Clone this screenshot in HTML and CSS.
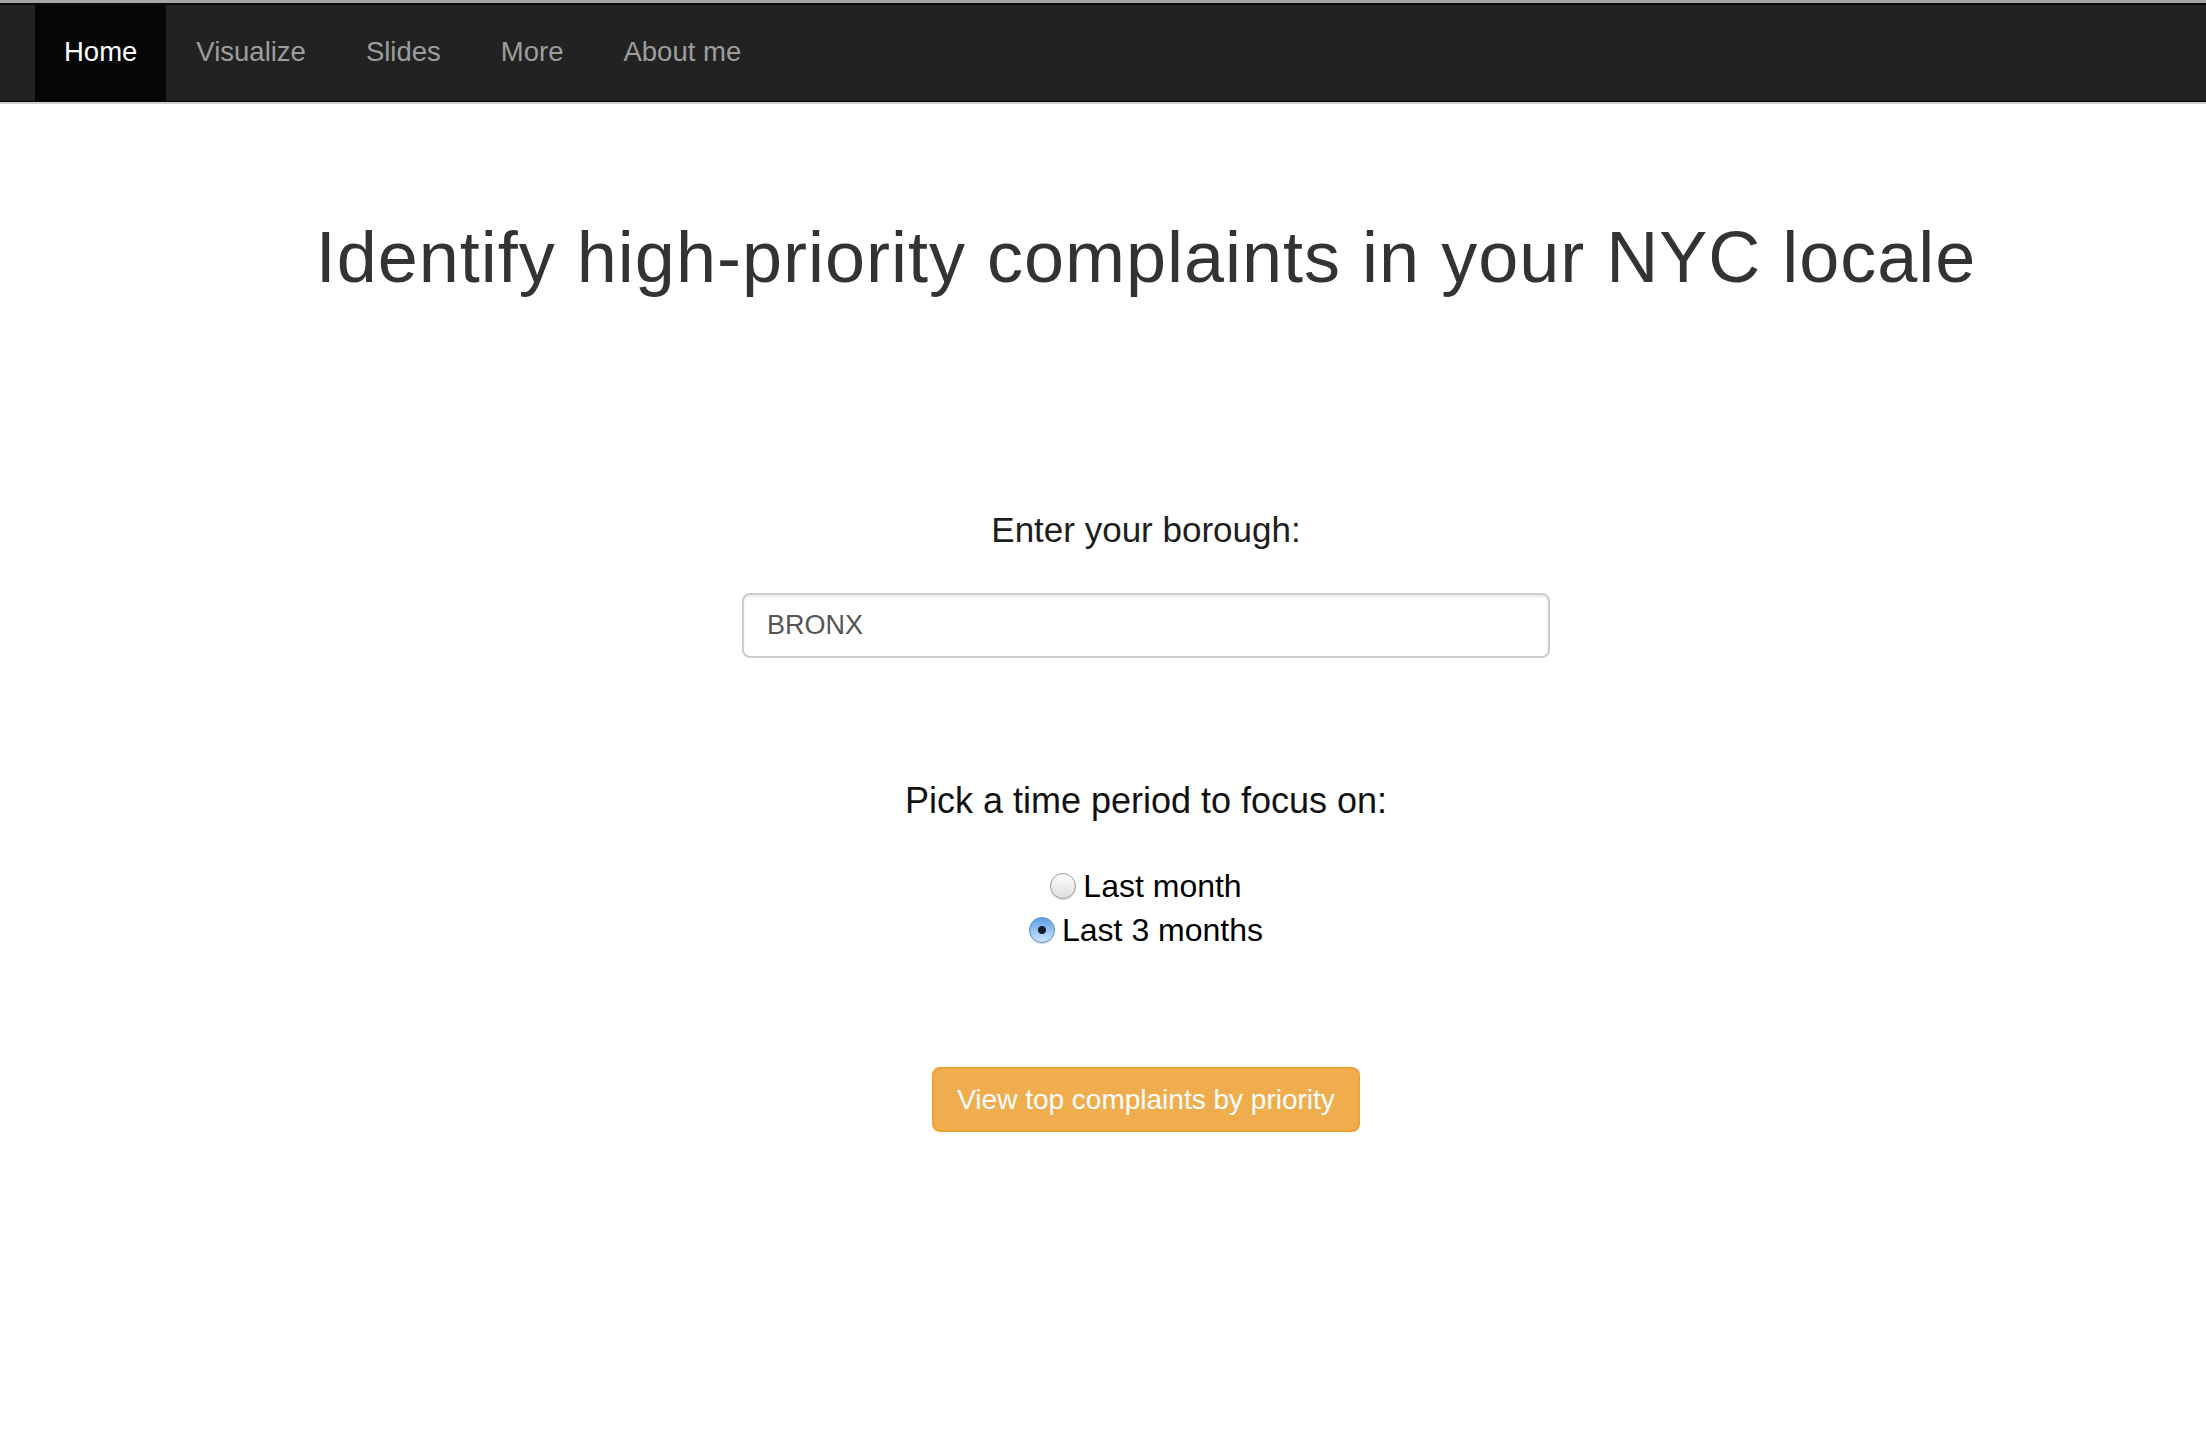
FILE: index.html
```html
<!DOCTYPE html>
<html lang="en">
<head>
<meta charset="utf-8">
<title>NYC Complaints</title>
<link rel="stylesheet" href="styles.css">
</head>
<body>
<div class="topline"></div>
<nav class="navbar">
  <ul class="nav">
    <li><a class="active" href="#">Home</a></li>
    <li><a href="#">Visualize</a></li>
    <li><a href="#">Slides</a></li>
    <li><a href="#">More</a></li>
    <li><a href="#">About me</a></li>
  </ul>
</nav>
<div class="navshadow"></div>
<main class="main">
  <h1 class="title">Identify high-priority complaints in your NYC locale</h1>
  <form class="form">
    <h4 class="prompt prompt-borough">Enter your borough:</h4>
    <input class="borough" type="text" value="BRONX">
    <h4 class="prompt prompt-period">Pick a time period to focus on:</h4>
    <div class="radios">
      <label class="radio"><input type="radio" name="period" value="1"><span>Last month</span></label>
      <label class="radio"><input type="radio" name="period" value="3" checked><span>Last 3 months</span></label>
    </div>
    <button class="btn" type="button">View top complaints by priority</button>
  </form>
</main>
</body>
</html>
```
FILE: styles.css
```css
html, body {
  margin: 0;
  padding: 0;
  background: #ffffff;
}
body {
  font-family: "Liberation Sans", Arial, Helvetica, sans-serif;
  color: #333333;
}
.topline {
  height: 3px;
  background: #a6a6a6;
}
.navbar {
  background: #222222;
  border-top: 2px solid #0a0a0a;
  border-bottom: 1px solid #080808;
  height: 96px;
  padding-left: 35px;
}
.nav {
  list-style: none;
  margin: 0;
  padding: 0;
  display: flex;
  height: 100%;
}
.nav li {
  display: flex;
}
.nav a {
  display: flex;
  align-items: center;
  padding: 0 30px 2px;
  font-size: 27.5px;
  color: #9d9d9d;
  text-decoration: none;
}
.nav a.active {
  background: #060606;
  color: #ffffff;
  padding: 0 29px 2px;
}
.navshadow {
  height: 2px;
  background: #cfcfcf;
}
.main {
  padding-left: 86px;
  display: flex;
  flex-direction: column;
  align-items: center;
}
.title {
  margin: 114px 0 0 0;
  font-size: 72px;
  line-height: 1.1;
  font-weight: normal;
  letter-spacing: 1px;
  color: #333333;
  text-align: center;
}
.form {
  display: flex;
  flex-direction: column;
  align-items: center;
}
.prompt {
  margin: 0;
  font-size: 35px;
  line-height: 1.1;
  font-weight: normal;
  color: #1e1e1e;
}
.prompt-borough {
  margin-top: 214px;
}
.borough {
  margin-top: 43px;
  box-sizing: border-box;
  width: 808px;
  height: 65px;
  padding: 0 23px;
  border: 2px solid #cccccc;
  border-radius: 8px;
  box-shadow: inset 0 2px 2px rgba(0,0,0,0.075);
  font-family: "Liberation Sans", Arial, sans-serif;
  font-size: 27px;
  color: #555555;
  outline: none;
}
.prompt-period {
  margin-top: 123px;
  font-size: 36px;
  color: #111111;
}
.radios {
  margin-top: 44px;
  display: flex;
  flex-direction: column;
  align-items: center;
}
.radio {
  display: flex;
  align-items: center;
  height: 44px;
  gap: 7px;
  font-size: 32px;
  color: #000000;
}
.radio input {
  appearance: none;
  -webkit-appearance: none;
  margin: 0;
  width: 26px;
  height: 26px;
  border-radius: 50%;
  border: 1px solid #9c9c9c;
  background: linear-gradient(#fefefe, #dedede);
  box-shadow: 0 1px 1px rgba(0,0,0,0.18);
  box-sizing: border-box;
}
.radio input:checked {
  border-color: #5b8cc4;
  background: radial-gradient(circle, #0d1a2a 0, #0d1a2a 3.5px, transparent 4.5px), linear-gradient(#5f9ee8, #a9d2f8 70%, #cbe6fc);
}
.btn {
  margin-top: 115px;
  box-sizing: border-box;
  height: 65px;
  padding: 0 23px;
  border: 2px solid #eea236;
  border-radius: 8px;
  background: #f0ad4e;
  color: #ffffff;
  font-family: "Liberation Sans", Arial, sans-serif;
  font-size: 28px;
  cursor: pointer;
}
```
